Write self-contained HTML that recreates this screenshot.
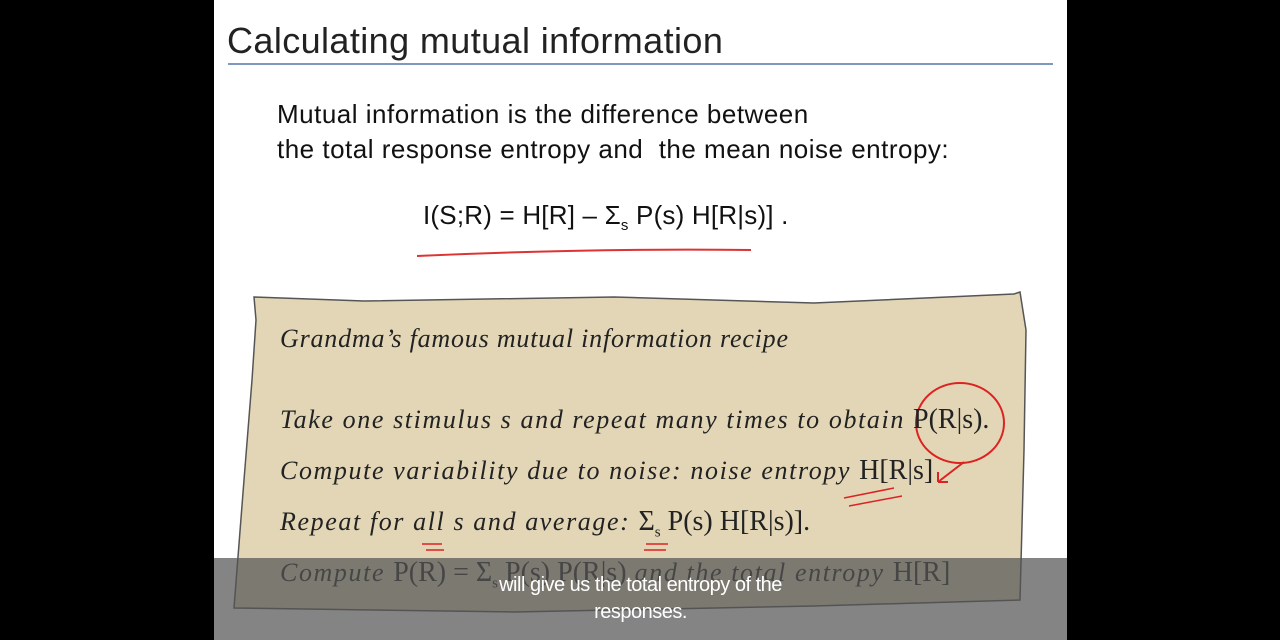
<!DOCTYPE html>
<html><head><style>
body{margin:0;width:1280px;height:640px;background:#000;position:relative;overflow:hidden;font-family:"Liberation Sans",sans-serif}
.slide{position:absolute;left:214px;top:0;width:853px;height:640px;background:#fff}
.t{position:absolute;white-space:nowrap}
.hw{font-family:"Liberation Serif",serif;font-style:italic;color:#222;letter-spacing:1.6px}
.m{font-family:"Liberation Serif",serif;font-style:normal;letter-spacing:0}
</style></head><body>
<div class="slide">
<div class="t" style="left:13px;top:20px;font-size:36px;color:#222;letter-spacing:0.4px">Calculating mutual information</div>
<div style="position:absolute;left:14px;top:63px;width:825px;height:2px;background:#7f98c0"></div>
<div class="t" style="left:63px;top:97px;font-size:26px;color:#111;line-height:35px;letter-spacing:0.5px">Mutual information is the difference between<br>the total response entropy and&nbsp; the mean noise entropy:</div>
<div class="t" style="left:209px;top:200px;font-size:26px;color:#111;letter-spacing:0.2px">I(S;R) = H[R] – Σ<sub style="font-size:15px">s</sub> P(s) H[R|s)] .</div>
<svg style="position:absolute;left:0;top:0" width="853" height="640">
<path d="M203 256 Q380 248 537 250" stroke="#d33" stroke-width="2" fill="none"/>
<polygon points="40,297 150,301 400,297 600,303 800,294 806,292 812,330 810,450 806,600 600,606 300,612 20,608 30,480 38,380 42,320" fill="#e2d6b6"/>
<polygon points="40,297 150,301 400,297 600,303 800,294 806,292 812,330 810,450 806,600 600,606 300,612 20,608 30,480 38,380 42,320" fill="none" stroke="#555" stroke-width="1.5"/>
<ellipse cx="746" cy="423" rx="44" ry="40" fill="none" stroke="#d22" stroke-width="2"/>
<path d="M750 462 L724 482 M724 482 L734 482 M724 482 L724 472" stroke="#d22" stroke-width="2" fill="none"/>
<path d="M630 498 L680 488 M635 506 L688 496 M208 544 L228 544 M212 550 L230 550 M432 544 L454 544 M430 550 L452 550" stroke="#d22" stroke-width="1.5" fill="none"/>
</svg>
<div class="t hw" style="left:66px;top:324px;font-size:26px;letter-spacing:0.8px">Grandma’s famous mutual information recipe</div>
<div class="t hw" style="left:66px;top:404px;font-size:26px">Take one stimulus s and repeat many times to obtain <span class="m" style="font-size:28px">P(R|s).</span></div>
<div class="t hw" style="left:66px;top:455px;font-size:26px">Compute variability due to noise: noise entropy <span class="m" style="font-size:28px">H[R|s]</span></div>
<div class="t hw" style="left:66px;top:506px;font-size:26px">Repeat for all s and average: <span class="m" style="font-size:28px">Σ<sub style="font-size:15px">s</sub> P(s) H[R|s)].</span></div>
<div class="t hw" style="left:66px;top:557px;font-size:26px">Compute <span class="m" style="font-size:28px">P(R) = Σ<sub style="font-size:15px">s</sub> P(s) P(R|s)</span> and the total entropy <span class="m" style="font-size:28px">H[R]</span></div>
<div style="position:absolute;left:0;top:558px;width:853px;height:82px;background:rgba(85,85,85,0.72)"></div>
<div class="t" style="left:0;width:853px;top:572px;text-align:center;font-family:'Liberation Sans',sans-serif;font-size:20px;color:#fff;line-height:27px;white-space:normal;letter-spacing:-0.5px">will give us the total entropy of the<br>responses.</div>
</div>
</body></html>
